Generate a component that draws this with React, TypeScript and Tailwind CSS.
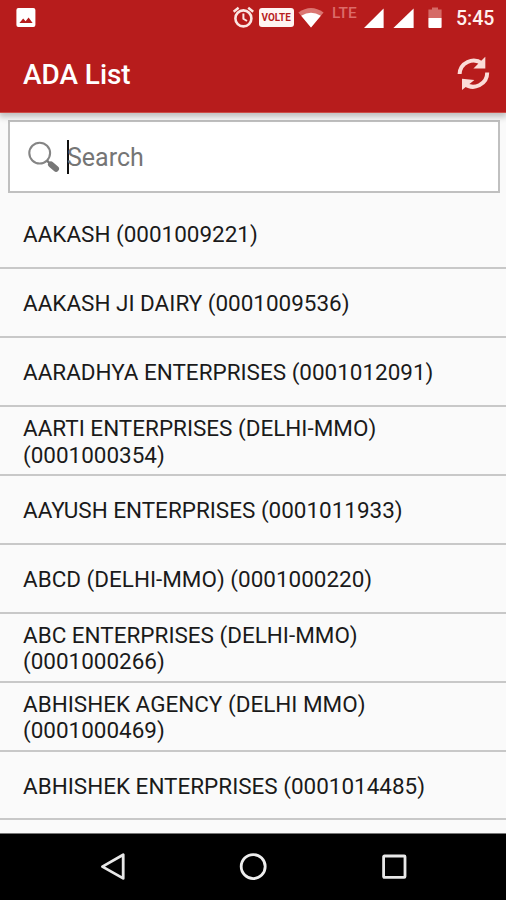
const entries: string[][] = [
  ['AAKASH (0001009221)'],
  ['AAKASH JI DAIRY (0001009536)'],
  ['AARADHYA ENTERPRISES (0001012091)'],
  ['AARTI ENTERPRISES (DELHI-MMO)', '(0001000354)'],
  ['AAYUSH ENTERPRISES (0001011933)'],
  ['ABCD (DELHI-MMO) (0001000220)'],
  ['ABC ENTERPRISES (DELHI-MMO)', '(0001000266)'],
  ['ABHISHEK AGENCY (DELHI MMO)', '(0001000469)'],
  ['ABHISHEK ENTERPRISES (0001014485)'],
];

function StatusBar() {
  return (
    <div className="flex h-9 items-start">
      <svg className="mt-2 ml-4 h-5 w-5" viewBox="0 0 20 20">
        <rect x="0.4" y="0" width="19" height="19" rx="2" fill="#fff" />
        <path d="M3.4 15 L7.2 10.4 L9.6 13.2 L12.6 9.4 L16.6 15 Z" fill="#b71c1c" />
      </svg>
      <svg className="mt-[6px] ml-[196px] h-[22px] w-[23px]" viewBox="0 0 23 22" fill="none" stroke="#fbe6e3">
        <circle cx="11.4" cy="12.4" r="8" strokeWidth="2.6" />
        <path d="M11.4 7.4 V12.8 L15 15" strokeWidth="2" />
        <path d="M1.6 5.8 L6.6 1.8 M16.2 1.8 L21.2 5.8" strokeWidth="2.4" />
      </svg>
      <div className="mt-[8px] ml-1 flex h-[19px] w-[35px] items-center justify-center rounded-[3px] bg-[#fff5f2]">
        <span className="scale-x-90 text-[11px] leading-none font-bold text-[#b71c1c]">VOLTE</span>
      </div>
      <svg className="mt-2 ml-1 h-5 w-[26px]" viewBox="0 0 26 20">
        <path d="M0.4 4.6 Q13 -4.4 25.6 4.6 L13 19.6 Z" fill="#db7672" />
        <path d="M3.2 7.8 Q13 1.8 22.8 7.8 L13 19.6 Z" fill="#fff" />
      </svg>
      <span className="mt-[5px] ml-[8px] w-[25px] text-[15.5px] leading-[16px] font-medium text-[#dc6b69]">LTE</span>
      <svg className="mt-2 ml-[7px] h-5 w-[50px]" viewBox="0 0 50 20" fill="#fff">
        <path d="M0 20 L19.6 0.4 V20 Z" />
        <path d="M29.4 20 L49.6 0.4 V20 Z" />
      </svg>
      <svg className="mt-[7px] ml-[14px] h-[22px] w-[14px]" viewBox="0 0 14 22">
        <path d="M4 0.4 H10 V2.4 H13.6 V11 H0.4 V2.4 H4 Z" fill="#d56b67" />
        <path d="M0.4 11 H13.6 V20 Q13.6 21 12.6 21 H1.4 Q0.4 21 0.4 20 Z" fill="#fff" />
      </svg>
      <span className="mt-[7px] ml-[14px] text-[19.5px] leading-6 font-medium text-[#fff0ee]">5:45</span>
    </div>
  );
}

function AppBar() {
  return (
    <header className="relative z-10 h-[113px] shrink-0 border-b border-[#cd4c47] bg-[#b71c1c] shadow-[0_3px_6px_1px_rgba(0,0,0,0.24)]">
      <StatusBar />
      <div className="flex h-[76px] items-center justify-between pr-[15px] pl-[23px]">
        <h1 className="pt-px text-[27.9px] leading-8 font-medium text-white">ADA List</h1>
        <svg className="h-9 w-9" viewBox="0 0 36 36">
          <g fill="none" stroke="#fbdcd8" strokeWidth="4">
            <path d="M4.6 18 A14 14 0 0 1 27 7.4" />
            <path d="M32.2 16.6 A14 14 0 0 1 9.4 27.6" />
          </g>
          <path d="M30.3 0.8 V12.4 H18.4 Z" fill="#fbdcd8" />
          <path d="M7 34 V22.8 L19.4 24 Z" fill="#fbdcd8" />
        </svg>
      </div>
    </header>
  );
}

function SearchBox() {
  return (
    <div className="mr-[6px] ml-[8px] mt-[7px] flex h-[73px] shrink-0 items-center border-2 border-[#c0c0c0] bg-white pl-[18px]">
      <svg className="h-8 w-8" viewBox="0 0 32 32" fill="none">
        <circle cx="11.7" cy="12.1" r="10.4" stroke="#858585" strokeWidth="2.1" />
        <path d="M19 19.6 L22.5 23" stroke="#777" strokeWidth="2.4" />
        <path d="M23 23.4 L28 27.8" stroke="#777" strokeWidth="6" strokeLinecap="round" />
      </svg>
      <span className="ml-[7px] h-[34px] w-[2px] bg-[#111]" />
      <span className="-ml-[2px] pt-[3px] text-[25px] leading-8 text-[#757575]">Search</span>
    </div>
  );
}

function NavBar() {
  return (
    <nav className="flex h-[67px] shrink-0 items-center justify-between border-t border-[#777] bg-black pr-[98px] pl-[98px]">
      <svg className="h-8 w-7" viewBox="0 0 28 32">
        <path d="M4.4 15.6 L25.2 3.8 V27.4 Z" fill="none" stroke="#e8e8e8" strokeWidth="2.8" strokeLinejoin="round" />
      </svg>
      <svg className="h-8 w-8" viewBox="0 0 32 32">
        <circle cx="16.2" cy="15.6" r="12" fill="none" stroke="#eee" strokeWidth="2.8" />
      </svg>
      <svg className="h-8 w-7" viewBox="0 0 28 32">
        <rect x="3.6" y="5" width="21.4" height="21.4" rx="0.8" fill="none" stroke="#e8e8e8" strokeWidth="2.8" />
      </svg>
    </nav>
  );
}

export default function App() {
  return (
    <div className="flex h-[900px] w-[506px] flex-col overflow-hidden bg-[#fafafa] font-[Roboto,sans-serif]">
      <AppBar />
      <SearchBox />
      <ul className="mt-[7px] min-h-0 flex-1 overflow-hidden">
        {entries.map((lines) => (
          <li
            key={lines[0]}
            className="flex h-[68.95px] flex-col justify-center border-b-2 border-[#c8c8c8] pt-[2.5px] pl-[23px] text-[22.48px] leading-[26.5px] whitespace-nowrap text-[#1a1a1a]"
          >
            {lines.map((line) => (
              <span key={line}>{line}</span>
            ))}
          </li>
        ))}
      </ul>
      <NavBar />
    </div>
  );
}
